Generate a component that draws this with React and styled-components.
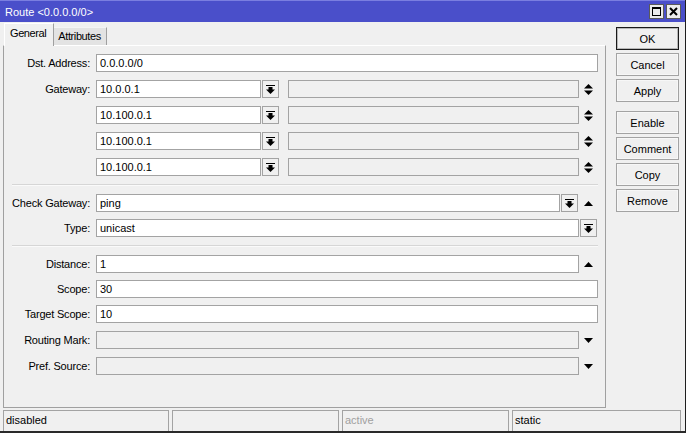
import React from "react";
import styled, { createGlobalStyle } from "styled-components";

const Global = createGlobalStyle`
  html, body { margin: 0; padding: 0; background: #ffffff; }
  body { font-family: "Liberation Sans", Arial, sans-serif; font-size: 11px; color: #000; }
  * { box-sizing: border-box; }
`;

const Window = styled.div`
  width: 686px;
  height: 433px;
  background: #f0f0f0;
  border-right: 1px solid #1e1e1e;
  border-bottom: 2px solid #2a2a2a;
  display: flex;
  flex-direction: column;
`;

const TitleBar = styled.div`
  height: 22px;
  flex: none;
  background: #4a4fca;
  border-top: 1px solid #7a7ee0;
  display: flex;
  align-items: center;
  justify-content: space-between;
  padding: 0 4px 0 5px;
`;

const Title = styled.span`
  color: #fff;
  font-size: 11px;
`;

const WinButtons = styled.div`
  display: flex;
  gap: 2px;
`;

const WinButton = styled.div`
  width: 15px;
  height: 15px;
  background: #ececec;
  border: 1px solid #5a5a5a;
  display: flex;
  align-items: center;
  justify-content: center;
`;

const Main = styled.div`
  height: 386px;
  flex: none;
  display: flex;
`;

const LeftCol = styled.div`
  width: 603px;
  margin-left: 3px;
  display: flex;
  flex-direction: column;
`;

const TabStrip = styled.div`
  height: 22px;
  margin-top: 1px;
  padding-left: 1px;
  display: flex;
  align-items: flex-end;
  position: relative;
  z-index: 1;
`;

const Tab = styled.div`
  height: ${(p) => (p.$active ? "23px" : "18px")};
  margin-bottom: ${(p) => (p.$active ? "-1px" : "0")};
  padding: ${(p) => (p.$active ? "3px 7px 0 5px" : "2px 5px 0 4px")};
  background: ${(p) => (p.$active ? "#f0f0f0" : "#e3e3e3")};
  border-top: 1px solid ${(p) => (p.$active ? "#ffffff" : "#f4f4f4")};
  border-left: ${(p) => (p.$active ? "1px solid #ffffff" : "none")};
  border-right: 1px solid #a0a0a0;
  font-size: 11px;
  letter-spacing: -0.4px;
  white-space: nowrap;
`;

const Panel = styled.div`
  height: 363px;
  border: 1px solid #a0a0a0;
  border-top-color: #ffffff;
  padding: 8px 6px 0 0;
  display: flex;
  flex-direction: column;
  gap: 8px;
`;

const Row = styled.div`
  display: grid;
  grid-template-columns: 86px 502px;
  column-gap: 6px;
  align-items: center;
  height: 18px;
  flex: none;
  margin-top: ${(p) => p.$mt || 0}px;
`;

const Label = styled.div`
  text-align: right;
  white-space: nowrap;
  letter-spacing: -0.2px;
`;

const Field = styled.div`
  display: flex;
  height: 18px;
`;

const Input = styled.div`
  height: 18px;
  ${(p) => (p.$w ? `width: ${p.$w}px; flex: none;` : "flex: 1;")}
  background: ${(p) => (p.$disabled ? "#f0f0f0" : "#ffffff")};
  border: 1px solid #a3a3a3;
  padding: 0 3px;
  line-height: 16px;
  white-space: nowrap;
  overflow: hidden;
`;

const DropBtn = styled.div`
  width: 17px;
  height: 18px;
  flex: none;
  margin-left: 1px;
  margin-right: ${(p) => p.$mr || 0}px;
  border: 1px solid #a3a3a3;
  background: #f0f0f0;
  display: flex;
  align-items: center;
  justify-content: center;
`;

const Side = styled.div`
  width: 19px;
  flex: none;
  margin-left: ${(p) => p.$ml || 0}px;
  display: flex;
  align-items: center;
  justify-content: center;
`;

const Spacer = styled.div`
  width: ${(p) => p.$w}px;
  flex: none;
`;

const Separator = styled.div`
  height: 2px;
  flex: none;
  margin-left: 8px;
  margin-right: 1px;
  border-top: 1px solid #d6d6d6;
  border-bottom: 1px solid #fafafa;
`;

const ButtonCol = styled.div`
  margin-left: 10px;
  padding-top: 5px;
  display: flex;
  flex-direction: column;
  gap: 3px;
`;

const Group = styled.div`
  display: flex;
  flex-direction: column;
  gap: 3px;
  margin-bottom: ${(p) => p.$mb || 0}px;
`;

const Button = styled.div`
  width: 63px;
  height: 23px;
  border: 1px solid ${(p) => (p.$default ? "#1a1a1a" : "#a3a3a3")};
  box-shadow: inset 0 0 0 1px ${(p) => (p.$default ? "#b8b8b8" : "#f7f7f7")};
  background: #f0f0f0;
  display: flex;
  align-items: center;
  justify-content: center;
  font-size: 11px;
`;

const StatusBar = styled.div`
  height: 23px;
  flex: none;
  padding: 2px 4px 0 3px;
  display: flex;
  gap: 3px;
`;

const StatusCell = styled.div`
  ${(p) => (p.$w ? `width: ${p.$w}px; flex: none;` : "flex: 1;")}
  border: 1px solid #a3a3a3;
  border-bottom: none;
  padding: 3px 2px 0;
  color: ${(p) => (p.$muted ? "#a0a0a0" : "#000")};
  white-space: nowrap;
`;

const DropIcon = () => (
  <svg width="9" height="9" viewBox="0 0 9 9">
    <rect x="0" y="0" width="9" height="1" fill="#000" />
    <rect x="2.5" y="2" width="4" height="3" fill="#000" />
    <polygon points="0,4.5 9,4.5 4.5,9" fill="#000" />
  </svg>
);

const UpIcon = () => (
  <svg width="9" height="5" viewBox="0 0 9 5">
    <polygon points="0,5 9,5 4.5,0" fill="#000" />
  </svg>
);

const DownIcon = () => (
  <svg width="9" height="5" viewBox="0 0 9 5">
    <polygon points="0,0 9,0 4.5,5" fill="#000" />
  </svg>
);

const UpDownIcon = () => (
  <svg width="9" height="11" viewBox="0 0 9 11">
    <polygon points="0,4.5 9,4.5 4.5,0" fill="#000" />
    <polygon points="0,6.5 9,6.5 4.5,11" fill="#000" />
  </svg>
);

const GatewayRow = ({ label, value }) => (
  <Row>
    <Label>{label}</Label>
    <Field>
      <Input $w={165}>{value}</Input>
      <DropBtn>
        <DropIcon />
      </DropBtn>
      <Spacer $w={9} />
      <Input $disabled />
      <Side>
        <UpDownIcon />
      </Side>
    </Field>
  </Row>
);

export default function App() {
  return (
    <>
      <Global />
      <Window>
        <TitleBar>
          <Title>Route &lt;0.0.0.0/0&gt;</Title>
          <WinButtons>
            <WinButton>
              <svg width="9" height="9" viewBox="0 0 9 9">
                <rect x="0.5" y="0.5" width="8" height="8" fill="none" stroke="#000" />
                <rect x="0" y="0" width="9" height="2" fill="#000" />
              </svg>
            </WinButton>
            <WinButton>
              <svg width="9" height="9" viewBox="0 0 9 9">
                <path d="M1 1 L8 8 M8 1 L1 8" stroke="#000" strokeWidth="2" />
              </svg>
            </WinButton>
          </WinButtons>
        </TitleBar>
        <Main>
          <LeftCol>
            <TabStrip>
              <Tab $active>General</Tab>
              <Tab>Attributes</Tab>
            </TabStrip>
            <Panel>
              <Row>
                <Label>Dst. Address:</Label>
                <Field>
                  <Input>0.0.0.0/0</Input>
                </Field>
              </Row>
              <GatewayRow label="Gateway:" value="10.0.0.1" />
              <GatewayRow label="" value="10.100.0.1" />
              <GatewayRow label="" value="10.100.0.1" />
              <GatewayRow label="" value="10.100.0.1" />
              <Separator />
              <Row>
                <Label>Check Gateway:</Label>
                <Field>
                  <Input>ping</Input>
                  <DropBtn>
                    <DropIcon />
                  </DropBtn>
                  <Side $ml={1}>
                    <UpIcon />
                  </Side>
                </Field>
              </Row>
              <Row $mt={-1}>
                <Label>Type:</Label>
                <Field>
                  <Input>unicast</Input>
                  <DropBtn $mr={1}>
                    <DropIcon />
                  </DropBtn>
                </Field>
              </Row>
              <Separator />
              <Row>
                <Label>Distance:</Label>
                <Field>
                  <Input>1</Input>
                  <Side>
                    <UpIcon />
                  </Side>
                </Field>
              </Row>
              <Row $mt={-1}>
                <Label>Scope:</Label>
                <Field>
                  <Input>30</Input>
                </Field>
              </Row>
              <Row $mt={-1}>
                <Label>Target Scope:</Label>
                <Field>
                  <Input>10</Input>
                </Field>
              </Row>
              <Row>
                <Label>Routing Mark:</Label>
                <Field>
                  <Input $disabled />
                  <Side>
                    <DownIcon />
                  </Side>
                </Field>
              </Row>
              <Row>
                <Label>Pref. Source:</Label>
                <Field>
                  <Input $disabled />
                  <Side>
                    <DownIcon />
                  </Side>
                </Field>
              </Row>
            </Panel>
          </LeftCol>
          <ButtonCol>
            <Group $mb={6}>
              <Button $default>OK</Button>
              <Button>Cancel</Button>
              <Button>Apply</Button>
            </Group>
            <Group>
              <Button>Enable</Button>
              <Button>Comment</Button>
              <Button>Copy</Button>
              <Button>Remove</Button>
            </Group>
          </ButtonCol>
        </Main>
        <StatusBar>
          <StatusCell $w={166}>disabled</StatusCell>
          <StatusCell $w={167} />
          <StatusCell $w={167} $muted>
            active
          </StatusCell>
          <StatusCell>static</StatusCell>
        </StatusBar>
      </Window>
    </>
  );
}
